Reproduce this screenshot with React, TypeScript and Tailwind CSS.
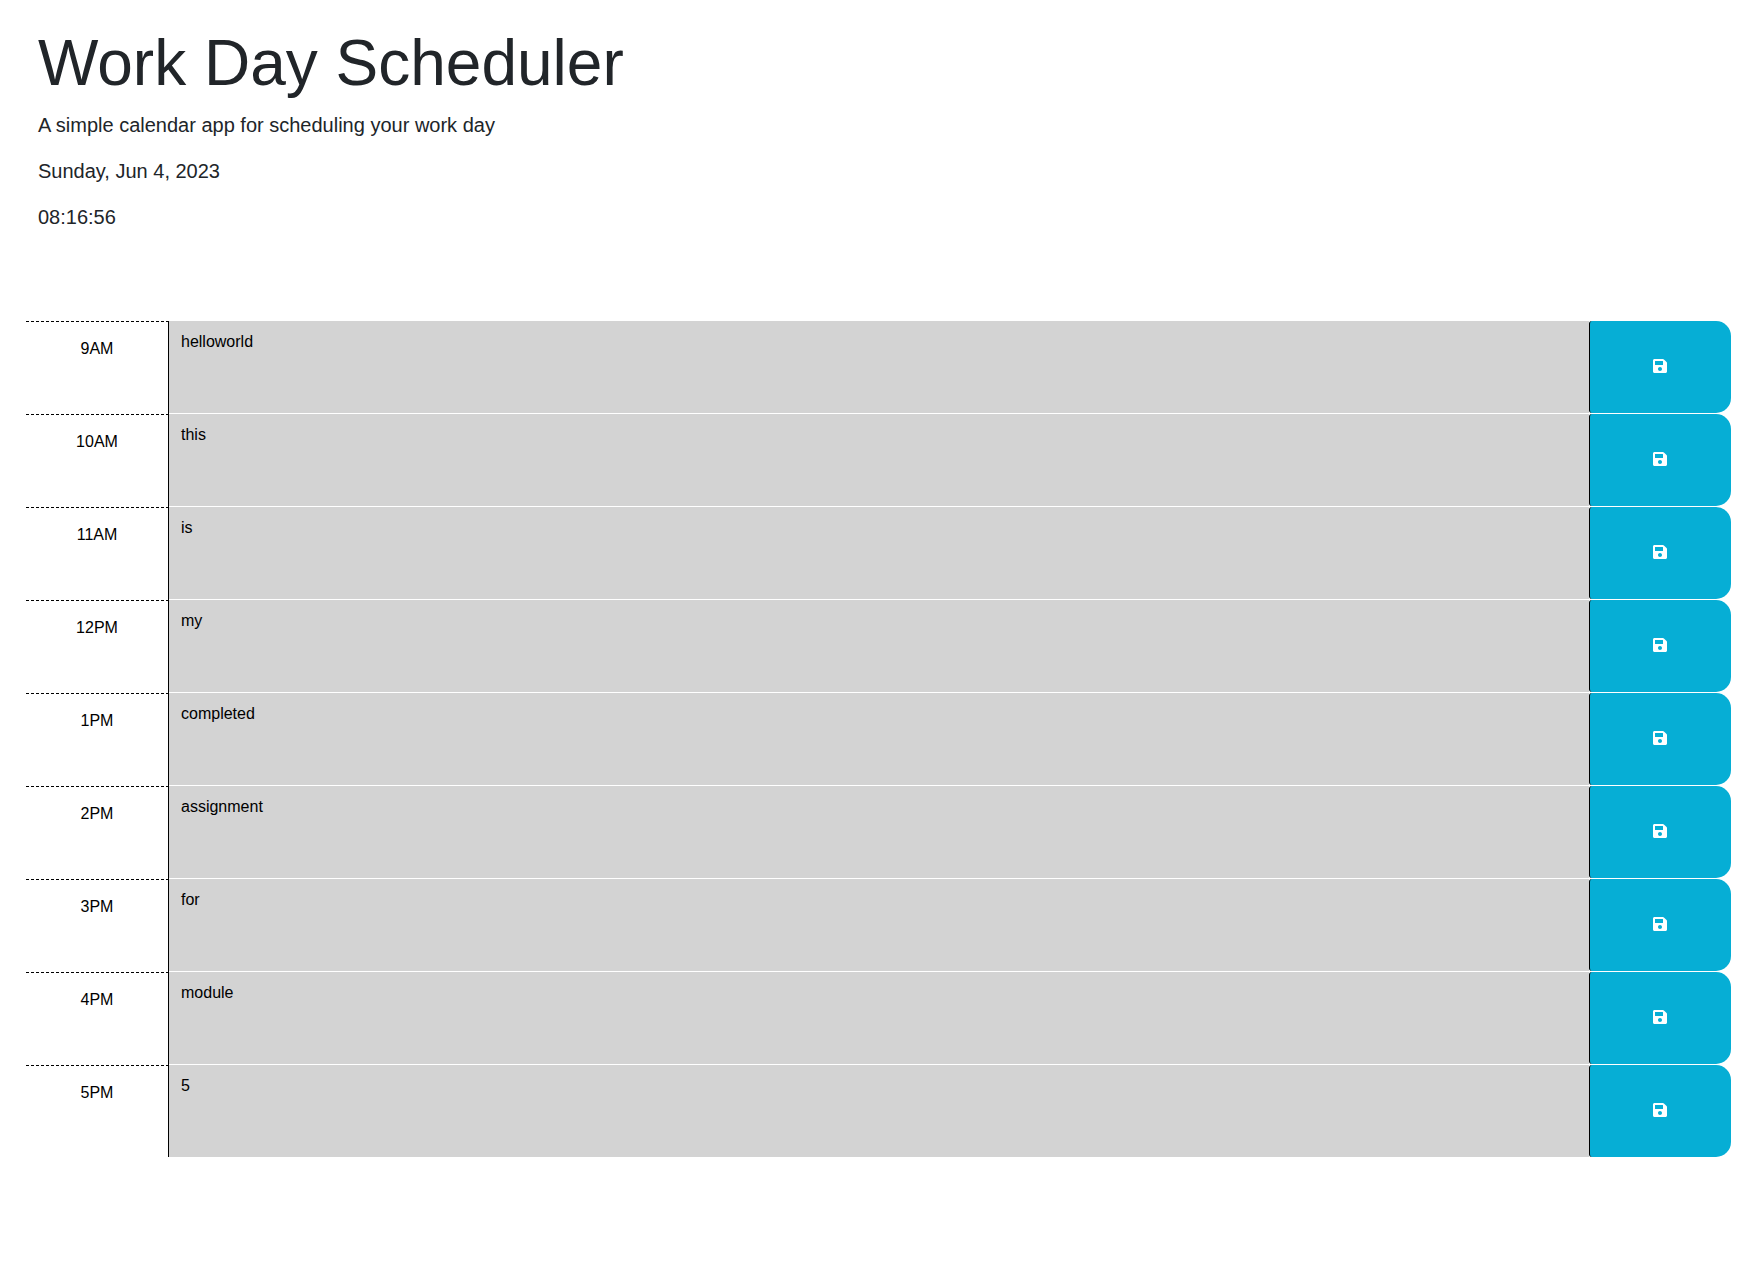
import { FaSave } from 'react-icons/fa';

const rows = [
  { hour: '9AM', text: 'helloworld' },
  { hour: '10AM', text: 'this' },
  { hour: '11AM', text: 'is' },
  { hour: '12PM', text: 'my' },
  { hour: '1PM', text: 'completed' },
  { hour: '2PM', text: 'assignment' },
  { hour: '3PM', text: 'for' },
  { hour: '4PM', text: 'module' },
  { hour: '5PM', text: '5' },
];

export default function App() {
  return (
    <div className="min-h-[1270px] bg-white font-['Liberation_Sans',Arial,sans-serif] text-[#212529]">
      <header className="pl-[38px] pt-[25px]">
        <h1 className="text-[64px] leading-[77px] font-light">Work Day Scheduler</h1>
        <p className="mt-2 text-xl leading-[30px] font-light">A simple calendar app for scheduling your work day</p>
        <p className="mt-4 text-xl leading-[30px] font-light">Sunday, Jun 4, 2023</p>
        <p className="mt-4 text-xl leading-[30px] font-light">08:16:56</p>
      </header>

      <main className="mt-[89px] px-[26px]">
        {rows.map((row) => (
          <div key={row.hour} className="group flex h-[93px] last:h-[92px]">
            <div className="w-[143px] shrink-0 border-t border-r border-t-black border-r-black border-dashed [border-right-style:solid] pt-[15px] text-center text-base leading-6 text-black">
              {row.hour}
            </div>
            <textarea
              readOnly
              defaultValue={row.text}
              className="min-w-0 flex-1 resize-none border-b border-white bg-[#d3d3d3] px-3 py-[9px] text-base leading-6 text-black outline-none group-last:border-b-0"
            />
            <button className="mb-px flex w-[142px] shrink-0 items-center justify-center rounded-l-[3px] rounded-r-[15px] border-l border-black bg-[#06aed5] pr-[2px] pb-[2px] text-white group-last:mb-0">
              <FaSave size={16} />
            </button>
          </div>
        ))}
      </main>
    </div>
  );
}
